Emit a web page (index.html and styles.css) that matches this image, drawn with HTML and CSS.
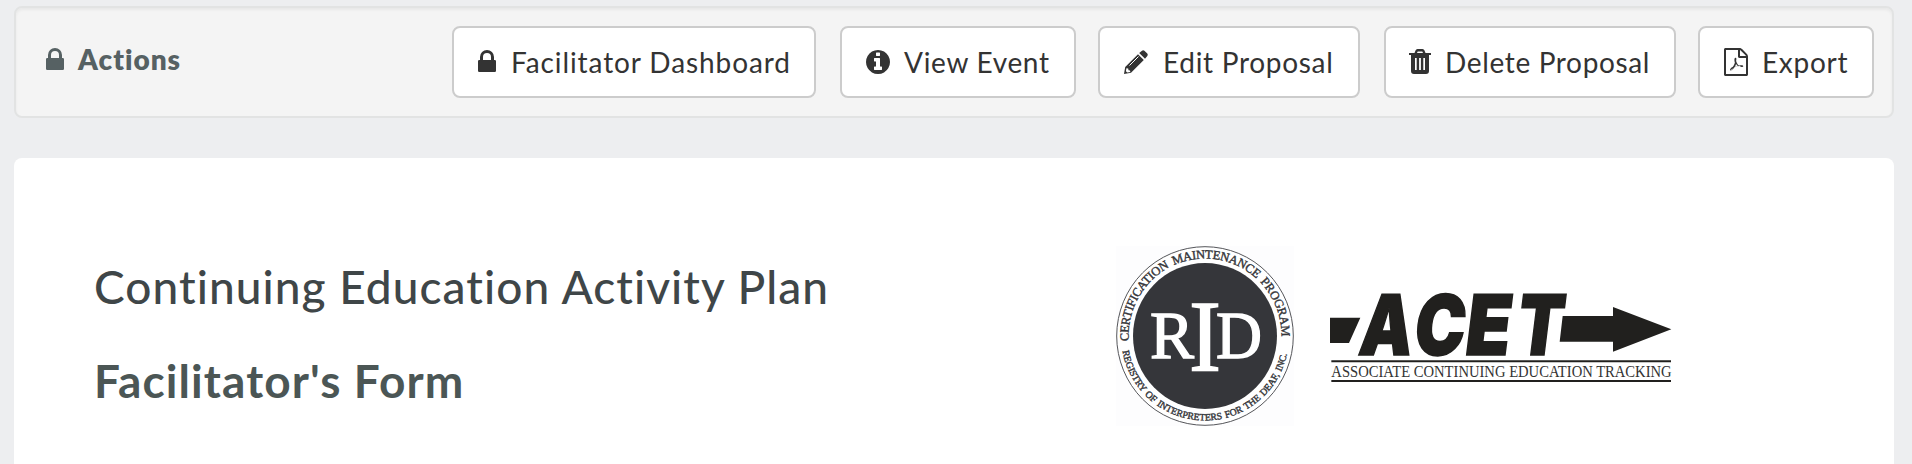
FILE: index.html
```html
<!DOCTYPE html>
<html lang="en">
<head>
<meta charset="utf-8">
<title>Continuing Education Activity Plan</title>
<link rel="stylesheet" href="styles.css">
</head>
<body>
<section class="actions">
  <h2 class="actions-title">
    <svg class="icon-lock" viewBox="0 0 18 22"><path d="M1.2 10H2V7a7 7 0 0 1 14 0v3h.8q1.2 0 1.2 1.2v9.6q0 1.2-1.2 1.2H1.2Q0 22 0 20.800V11.200Q0 10 1.200 10zM5 10h8V7a4 4 0 0 0-8 0z"/></svg>
    <span class="t-actions">Actions</span>
  </h2>
  <nav class="buttons">
    <a class="btn b-dash"><svg class="icon-lock" viewBox="0 0 18 22"><path d="M1.2 10H2V7a7 7 0 0 1 14 0v3h.8q1.2 0 1.2 1.2v9.6q0 1.2-1.2 1.2H1.2Q0 22 0 20.800V11.200Q0 10 1.200 10zM5 10h8V7a4 4 0 0 0-8 0z"/></svg><span>Facilitator Dashboard</span></a>
    <a class="btn b-view"><svg class="icon-info" viewBox="0 0 1536 1536"><path d="M1024 1248v-160q0-14-9-23t-23-9h-96V544q0-14-9-23t-23-9H544q-14 0-23 9t-9 23v160q0 14 9 23t23 9h96v320h-96q-14 0-23 9t-9 23v160q0 14 9 23t23 9h448q14 0 23-9t9-23zM896 352V192q0-14-9-23t-23-9H672q-14 0-23 9t-9 23v160q0 14 9 23t23 9h192q14 0 23-9t9-23zm640 416q0 209-103 385.500T1153.500 1433 768 1536t-385.500-103T103 1153.500 0 768t103-385.500T382.500 103 768 0t385.500 103T1433 382.500 1536 768z"/></svg><span>View Event</span></a>
    <a class="btn b-edit"><svg class="icon-pencil" viewBox="0 0 24 24"><path d="M14 4.200l5.800 5.800L7 22.800 0 24l1.200-7zM15.200 3L18 .7q1.200-1 2.400 0l2.900 2.900q1 1.200 0 2.400L21 8.800z"/><path class="cut" d="M5.500 15.500l9-9"/><path class="tip" d="M2.400 18.200l1.800.400.300 1.600 1.500.300.300 1.500-3 .600-1.400-1.400z"/></svg><span>Edit Proposal</span></a>
    <a class="btn b-delete"><svg class="icon-trash" viewBox="0 0 22 25"><path fill-rule="evenodd" d="M0 4h5.500l1-2.500Q7 0 8.500 0h5Q15 0 15.500 1.500l1 2.500H22v2H0zM8 4h6l-.7-1.600H8.700zM2 6h18v16q0 3-3 3H5q-3 0-3-3zM6 9v12h1.700V9zm4.100 0v12h1.800V9zm4.200 0v12H16V9z"/></svg><span>Delete Proposal</span></a>
    <a class="btn b-export"><svg class="icon-pdf" viewBox="0 0 24 28"><path d="M22.937 5.938c.578.578 1.062 1.734 1.062 2.562v18c0 .828-.672 1.500-1.500 1.500h-21c-.828 0-1.500-.672-1.500-1.500v-25c0-.828.672-1.500 1.500-1.500h14c.828 0 1.984.484 2.562 1.062zM16 2.125V8h5.875c-.094-.266-.234-.531-.344-.641l-4.891-4.891c-.109-.109-.375-.25-.641-.344zM22 26V10h-6.500c-.828 0-1.500-.672-1.500-1.500V2H2v24h20zM13.969 16.672c.344.266.719.516 1.141.766a14.400 14.400 0 0 1 1.750-.109c.891 0 2.016.094 2.328.609.094.141.141.406-.031.672-.156.234-.453.375-.844.375-.828 0-2.063-.438-3.078-.953-1.688.187-3.594.578-4.938 1.109-1.328 2.266-2.422 3.391-3.266 3.391a.851.851 0 0 1-.391-.094l-.344-.172c-.156-.094-.203-.250-.234-.422-.156-.703.766-2.031 2.844-3.047.297-.438 1.219-2.203 1.969-4.172-.484-1.844-.578-3.531-.281-4.250.141-.344.438-.547.797-.547h.25c.328 0 .531.188.625.422.234.531.094 1.594-.156 2.625.406 1.281 1.016 2.531 1.859 3.797zM6.500 22.900c1-.4 1.900-1.500 2.500-2.400-1.400.8-2.300 1.700-2.500 2.400zM10.600 19.200c1.100-.4 2.300-.7 3.500-.9-.9-.6-1.500-1.400-2-2.300-.4 1.100-.9 2.200-1.500 3.200z" fill-rule="evenodd"/></svg><span>Export</span></a>
  </nav>
</section>
<main class="plan">
  <div class="headings">
    <h1 class="plan-title"><span>Continuing Education Activity Plan</span></h1>
    <h2 class="plan-sub"><span>Facilitator's Form</span></h2>
  </div>
  <div class="logos">
    <svg class="seal" viewBox="-89 -90 178 180">
      <defs>
        <path id="arc-top" d="M-76.200 5A76.400 76.900 0 1 1 76.200 5"/>
        <path id="arc-bottom" d="M-82.500 15A83.800 84.300 0 0 0 82.500 15"/>
      </defs>
      <rect class="seal-bg" x="-89" y="-90" width="178" height="180"/>
      <ellipse class="seal-ring" rx="88.300" ry="89.300"/>
      <ellipse class="seal-disc" rx="72" ry="73"/>
      <text class="arc top"><textPath href="#arc-top" textLength="247">CERTIFICATION MAINTENANCE PROGRAM</textPath></text>
      <text class="arc bottom"><textPath href="#arc-bottom" textLength="231">REGISTRY OF INTERPRETERS FOR THE DEAF, INC.</textPath></text>
      <text class="rid" x="-55" y="22" textLength="44" lengthAdjust="spacingAndGlyphs">R</text>
      <text class="rid big" x="-16" y="34.500" textLength="32" lengthAdjust="spacingAndGlyphs">I</text>
      <text class="rid" x="11" y="22" textLength="46" lengthAdjust="spacingAndGlyphs">D</text>
    </svg>
    <svg class="acet" viewBox="60 66 1026 270">
      <path d="M60 143h91l-34 76H60zM758 138h151v-27l175 67-175 67v-30H749z"/>
      <g class="letters">
        <text transform="translate(142 256) skewX(-7) scale(.8 1)">A</text>
        <text transform="translate(306 256) skewX(-7) scale(.81 1)">C</text>
        <text transform="translate(460 256) skewX(-7) scale(.88 1)">E</text>
        <text transform="translate(613 256) skewX(-7) scale(.81 1)">T</text>
      </g>
      <path d="M64 271h1019v6H64zM64 330h1019v6H64z"/>
      <text class="tagline" x="64" y="320" textLength="1021" lengthAdjust="spacingAndGlyphs">ASSOCIATE CONTINUING EDUCATION TRACKING</text>
    </svg>
  </div>
</main>
</body>
</html>
```

FILE: styles.css
```css
* { box-sizing: border-box; }
body { margin: 0; padding: 6px 18px 0 14px; height: 464px; overflow: hidden; background: #edeef0; font-family: Lato, "Open Sans", sans-serif; font-variant-ligatures: none; color: #333; display: flex; flex-direction: column; }
h1, h2 { margin: 0; }
svg { display: block; flex: none; fill: currentColor; overflow: visible; }
.actions { height: 112px; flex: none; display: flex; justify-content: space-between; align-items: flex-start; padding: 18px 18px 0 30px; background: #f4f4f4; border: 2px solid #e2e3e3; border-radius: 8px; box-shadow: inset 0 2px 3px rgba(0,0,0,.05); }
.actions-title { display: flex; align-items: center; gap: 14px; height: 66px; color: #566163; font-size: 28px; font-weight: 800; line-height: 36px; letter-spacing: 1px; }
.buttons { display: flex; }
.btn { height: 72px; display: flex; align-items: center; padding: 0 0 1px 24px; border: 2px solid #ccc; border-radius: 8px; background: #fff; font-size: 28px; line-height: 40px; white-space: nowrap; }
.b-dash { width: 364px; margin-right: 24px; gap: 15px; letter-spacing: .9px; }
.b-view { width: 236px; margin-right: 22px; gap: 14px; letter-spacing: .7px; }
.b-edit { width: 262px; margin-right: 24px; gap: 15px; letter-spacing: .7px; }
.b-delete { width: 292px; margin-right: 22px; gap: 13px; letter-spacing: .65px; }
.b-export { width: 176px; gap: 14px; letter-spacing: .7px; }
.icon-lock { width: 18px; height: 22px; }
.btn .icon-lock { margin-top: -2px; }
.icon-info { width: 24px; height: 24px; }
.icon-pencil { width: 24px; height: 24px; }
.icon-trash { width: 22px; height: 25px; }
.b-delete .icon-trash { margin-left: -1px; margin-right: 1px; }
.icon-pdf { width: 24px; height: 28px; }
.cut { fill: none; stroke: #fff; stroke-width: 1; }
.tip { fill: #fff; }
.plan { margin-top: 40px; flex: 1; background: #fff; border-radius: 8px 8px 0 0; display: flex; padding: 88px 0 0 80px; }
.headings { width: 1022px; flex: none; padding-top: 10px; }
.plan-title { color: #3f4648; font-size: 46px; line-height: 62px; font-weight: 500; letter-spacing: 1.05px; white-space: nowrap; }
.plan-sub { margin-top: 32px; color: #4b5655; font-size: 46px; line-height: 62px; font-weight: 700; letter-spacing: 1.1px; white-space: nowrap; }
.logos { display: flex; gap: 36px; }
.seal { width: 178px; height: 180px; }
.seal-bg { fill: #fdfdfe; }
.seal-ring { fill: #fff; stroke: #55565a; stroke-width: 1; }
.seal-disc { fill: #35363a; }
.arc { font-family: "Liberation Serif", serif; fill: #35363a; stroke: #35363a; stroke-width: .4; }
.top { font-size: 12.5px; word-spacing: 2px; }
.bottom { font-size: 9.7px; word-spacing: 1px; }
.rid { font-family: "Liberation Serif", serif; font-size: 68px; fill: #fff; stroke: #fff; stroke-width: 1.4; }
.big { font-size: 102px; }
.acet { width: 342px; height: 90px; margin-top: 46px; fill: #21201e; }
.letters { font-family: Inter, "Liberation Sans", sans-serif; font-weight: 900; font-size: 250px; stroke: #21201e; stroke-width: 5; }
.tagline { font-family: "Liberation Serif", serif; font-size: 47px; fill: #333; }
```
